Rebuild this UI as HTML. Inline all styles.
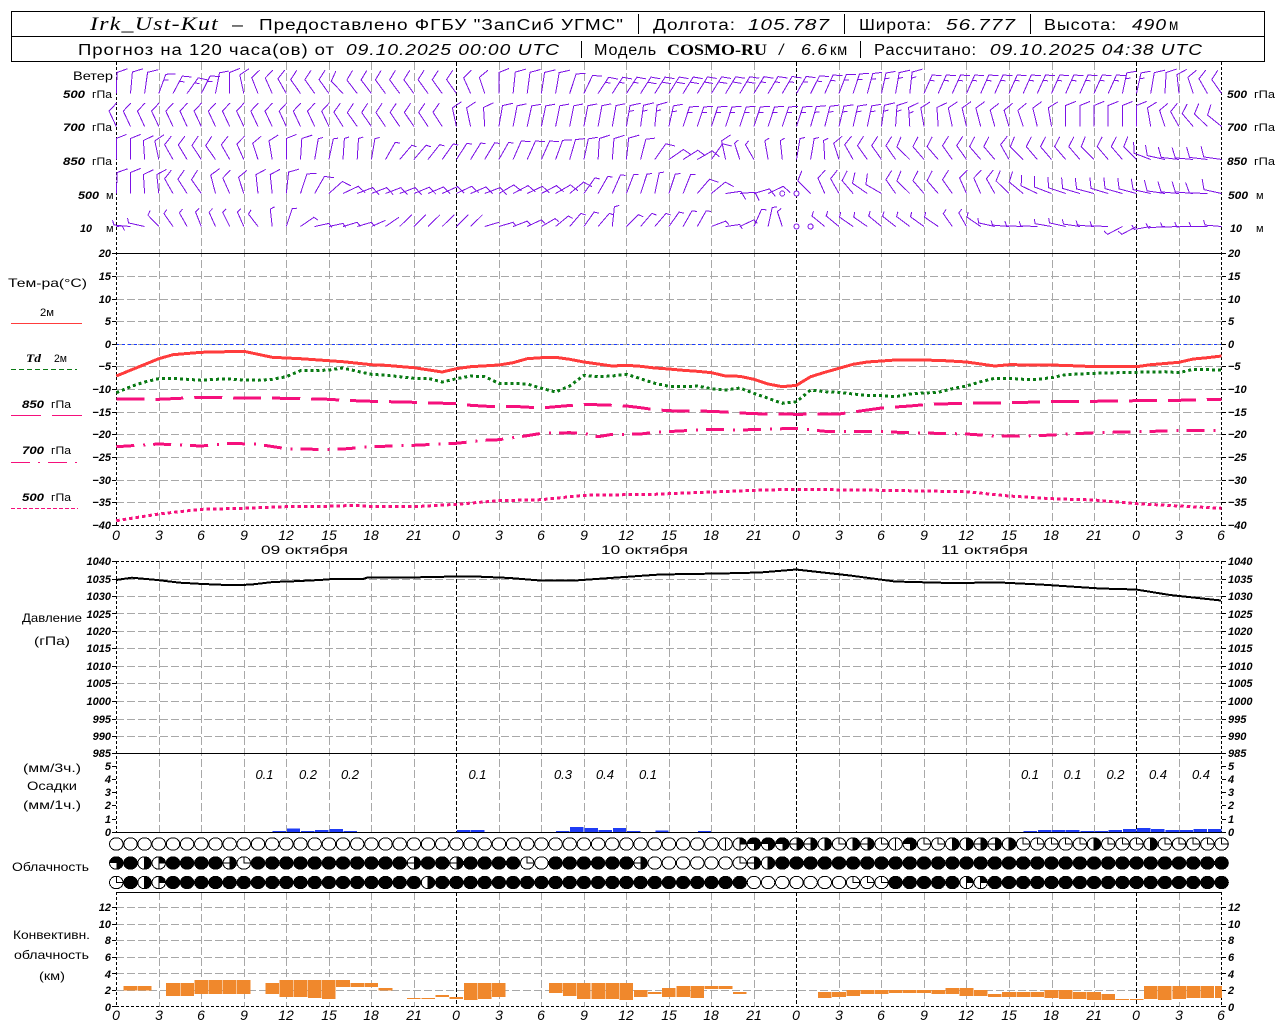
<!DOCTYPE html>
<html lang="ru"><head><meta charset="utf-8"><title>Irk_Ust-Kut</title>
<style>
html,body{margin:0;padding:0;background:#fff}
svg{display:block}
text{font-family:"Liberation Sans","DejaVu Sans",sans-serif;fill:#000}
.t{font-size:15.5px;letter-spacing:.8px}
.i{font-style:italic}
.s{font-family:"Liberation Serif","DejaVu Serif",serif;font-style:italic;font-size:19px;letter-spacing:1px}
.b{font-family:"Liberation Serif","DejaVu Serif",serif;font-weight:bold;font-size:16px}
.l{font-size:12px}
.n{font-size:11px;font-style:italic;font-weight:bold}
text[style*="normal"]{font-weight:normal}
.x{font-size:14px;font-style:italic;text-anchor:middle}
.p{font-size:13px;font-style:italic;text-anchor:middle}
.e{text-anchor:end}
.m{text-anchor:middle}
</style></head><body>
<svg id="c" xmlns="http://www.w3.org/2000/svg" width="1280" height="1024" viewBox="0 0 1280 1024">
<rect width="1280" height="1024" fill="#fff"/>
<g id="g" shape-rendering="crispEdges"></g>

<!-- header -->
<g shape-rendering="crispEdges" fill="none" stroke="#000">
<rect x="11.5" y="11.5" width="1253" height="50"/>
<path d="M11 36.5H1265M638.5 14V34M844.5 14V34M1030.5 14V34M581.5 41V58M860.5 41V58"/>
</g>
<text class="s" x="90" y="30" textLength="129">Irk_Ust-Kut</text>
<text class="t" x="232" y="30" textLength="12">–</text>
<text class="t" x="259" y="30" textLength="365">Предоставлено ФГБУ "ЗапСиб УГМС"</text>
<text class="t" x="653" y="30" textLength="83">Долгота:</text>
<text class="t i" x="748" y="30" textLength="82">105.787</text>
<text class="t" x="859" y="30" textLength="73">Широта:</text>
<text class="t i" x="946" y="30" textLength="70">56.777</text>
<text class="t" x="1044" y="30" textLength="73">Высота:</text>
<text class="t i" x="1132" y="30" textLength="35">490</text>
<text class="t" x="1169" y="30" textLength="10">м</text>

<text class="t" x="78" y="55" textLength="257">Прогноз на 120 часа(ов) от</text>
<text class="t i" x="346" y="55" textLength="214">09.10.2025 00:00 UTC</text>
<text class="t" x="594" y="55" textLength="63">Модель</text>
<text class="b" x="667" y="55" textLength="100">COSMO-RU</text>
<text class="t i" x="779" y="55">/</text>
<text class="t i" x="801" y="55" textLength="27">6.6</text>
<text class="t" x="830" y="55" textLength="18">км</text>
<text class="t" x="874" y="55" textLength="103">Рассчитано:</text>
<text class="t i" x="990" y="55" textLength="213">09.10.2025 04:38 UTC</text>

<!-- wind labels -->
<text class="l" x="73" y="80" textLength="40">Ветер</text>
<text class="n" x="63" y="98" textLength="22">500</text><text class="n" x="92" y="98" textLength="20" style="font-style:normal">гПа</text>
<text class="n" x="63" y="131" textLength="22">700</text><text class="n" x="92" y="131" textLength="20" style="font-style:normal">гПа</text>
<text class="n" x="63" y="165" textLength="22">850</text><text class="n" x="92" y="165" textLength="20" style="font-style:normal">гПа</text>
<text class="n" x="78" y="199" textLength="21">500</text><text class="n" x="106" y="199" style="font-style:normal">м</text>
<text class="n" x="80" y="232" textLength="12">10</text><text class="n" x="106" y="232" style="font-style:normal">м</text>
<text class="n" x="1227" y="98" textLength="20">500</text><text class="n" x="1254" y="98" textLength="21" style="font-style:normal">гПа</text>
<text class="n" x="1227" y="131" textLength="20">700</text><text class="n" x="1254" y="131" textLength="21" style="font-style:normal">гПа</text>
<text class="n" x="1227" y="165" textLength="20">850</text><text class="n" x="1254" y="165" textLength="21" style="font-style:normal">гПа</text>
<text class="n" x="1228" y="199" textLength="20">500</text><text class="n" x="1256" y="199" style="font-style:normal">м</text>
<text class="n" x="1230" y="232" textLength="12">10</text><text class="n" x="1256" y="232" style="font-style:normal">м</text>

<!-- temperature legend -->
<text class="l" x="8" y="287" textLength="79">Тем-ра(°C)</text>
<text class="l" x="40" y="316" textLength="14" style="font-size:11px">2м</text>
<text class="n" x="26" y="362" textLength="15" style="font-family:'Liberation Serif',serif;font-size:12px">Td</text>
<text class="n" x="54" y="362" textLength="13" style="font-style:normal">2м</text>
<text class="n" x="22" y="408" textLength="22">850</text><text class="n" x="51" y="408" textLength="20" style="font-style:normal">гПа</text>
<text class="n" x="22" y="454" textLength="22">700</text><text class="n" x="51" y="454" textLength="20" style="font-style:normal">гПа</text>
<text class="n" x="22" y="501" textLength="22">500</text><text class="n" x="51" y="501" textLength="20" style="font-style:normal">гПа</text>

<!-- temperature ticks -->
<g class="n e"><text class="n e" x="111" y="257">20</text><text class="n e" x="111" y="280">15</text><text class="n e" x="111" y="303">10</text><text class="n e" x="111" y="325">5</text><text class="n e" x="111" y="348">0</text><text class="n e" x="111" y="370">−5</text><text class="n e" x="111" y="393">−10</text><text class="n e" x="111" y="416">−15</text><text class="n e" x="111" y="438">−20</text><text class="n e" x="111" y="461">−25</text><text class="n e" x="111" y="484">−30</text><text class="n e" x="111" y="506">−35</text><text class="n e" x="111" y="529">−40</text></g>
<g class="n"><text class="n" x="1228" y="257">20</text><text class="n" x="1228" y="280">15</text><text class="n" x="1228" y="303">10</text><text class="n" x="1228" y="325">5</text><text class="n" x="1228" y="348">0</text><text class="n" x="1228" y="370">−5</text><text class="n" x="1228" y="393">−10</text><text class="n" x="1228" y="416">−15</text><text class="n" x="1228" y="438">−20</text><text class="n" x="1228" y="461">−25</text><text class="n" x="1228" y="484">−30</text><text class="n" x="1228" y="506">−35</text><text class="n" x="1228" y="529">−40</text></g>

<!-- x axis 1 -->
<g><text class="x" x="116" y="540">0</text><text class="x" x="159" y="540">3</text><text class="x" x="201" y="540">6</text><text class="x" x="244" y="540">9</text><text class="x" x="286" y="540">12</text><text class="x" x="329" y="540">15</text><text class="x" x="371" y="540">18</text><text class="x" x="414" y="540">21</text><text class="x" x="456" y="540">0</text><text class="x" x="499" y="540">3</text><text class="x" x="541" y="540">6</text><text class="x" x="584" y="540">9</text><text class="x" x="626" y="540">12</text><text class="x" x="669" y="540">15</text><text class="x" x="711" y="540">18</text><text class="x" x="754" y="540">21</text><text class="x" x="796" y="540">0</text><text class="x" x="839" y="540">3</text><text class="x" x="881" y="540">6</text><text class="x" x="924" y="540">9</text><text class="x" x="966" y="540">12</text><text class="x" x="1009" y="540">15</text><text class="x" x="1051" y="540">18</text><text class="x" x="1094" y="540">21</text><text class="x" x="1136" y="540">0</text><text class="x" x="1179" y="540">3</text><text class="x" x="1221" y="540">6</text></g>
<text class="l" x="261" y="554" textLength="87">09 октября</text>
<text class="l" x="601" y="554" textLength="87">10 октября</text>
<text class="l" x="941" y="554" textLength="87">11 октября</text>

<!-- pressure -->
<text class="l" x="22" y="622" textLength="60">Давление</text>
<text class="l" x="34" y="645" textLength="36">(гПа)</text>
<g><text class="n e" x="111" y="565">1040</text><text class="n e" x="111" y="583">1035</text><text class="n e" x="111" y="600">1030</text><text class="n e" x="111" y="618">1025</text><text class="n e" x="111" y="635">1020</text><text class="n e" x="111" y="652">1015</text><text class="n e" x="111" y="670">1010</text><text class="n e" x="111" y="687">1005</text><text class="n e" x="111" y="705">1000</text><text class="n e" x="111" y="723">995</text><text class="n e" x="111" y="740">990</text><text class="n e" x="111" y="757">985</text></g>
<g><text class="n" x="1228" y="565">1040</text><text class="n" x="1228" y="583">1035</text><text class="n" x="1228" y="600">1030</text><text class="n" x="1228" y="618">1025</text><text class="n" x="1228" y="635">1020</text><text class="n" x="1228" y="652">1015</text><text class="n" x="1228" y="670">1010</text><text class="n" x="1228" y="687">1005</text><text class="n" x="1228" y="705">1000</text><text class="n" x="1228" y="723">995</text><text class="n" x="1228" y="740">990</text><text class="n" x="1228" y="757">985</text></g>

<!-- precip -->
<text class="l" x="23" y="772" textLength="58">(мм/3ч.)</text>
<text class="l" x="27" y="790" textLength="50">Осадки</text>
<text class="l" x="23" y="809" textLength="58">(мм/1ч.)</text>
<g><text class="n e" x="111" y="770">5</text><text class="n e" x="111" y="783">4</text><text class="n e" x="111" y="796">3</text><text class="n e" x="111" y="809">2</text><text class="n e" x="111" y="823">1</text><text class="n e" x="111" y="836">0</text><text class="n" x="1228" y="770">5</text><text class="n" x="1228" y="783">4</text><text class="n" x="1228" y="796">3</text><text class="n" x="1228" y="809">2</text><text class="n" x="1228" y="823">1</text><text class="n" x="1228" y="836">0</text></g>
<g><text class="p" x="264.5" y="779">0.1</text><text class="p" x="308" y="779">0.2</text><text class="p" x="350" y="779">0.2</text><text class="p" x="477.5" y="779">0.1</text><text class="p" x="563" y="779">0.3</text><text class="p" x="605" y="779">0.4</text><text class="p" x="648" y="779">0.1</text><text class="p" x="1030" y="779">0.1</text><text class="p" x="1072.5" y="779">0.1</text><text class="p" x="1115.5" y="779">0.2</text><text class="p" x="1158" y="779">0.4</text><text class="p" x="1201" y="779">0.4</text></g>

<text class="l" x="12" y="871" textLength="77">Облачность</text>

<!-- convective -->
<text class="l" x="13" y="939" textLength="77">Конвективн.</text>
<text class="l" x="14" y="959" textLength="75">облачность</text>
<text class="l" x="39" y="980" textLength="26">(км)</text>
<g><text class="n e" x="111" y="911">12</text><text class="n e" x="111" y="928">10</text><text class="n e" x="111" y="944">8</text><text class="n e" x="111" y="961">6</text><text class="n e" x="111" y="978">4</text><text class="n e" x="111" y="994">2</text><text class="n e" x="111" y="1011">0</text><text class="n" x="1228" y="911">12</text><text class="n" x="1228" y="928">10</text><text class="n" x="1228" y="944">8</text><text class="n" x="1228" y="961">6</text><text class="n" x="1228" y="978">4</text><text class="n" x="1228" y="994">2</text><text class="n" x="1228" y="1011">0</text></g>

<!-- x axis 2 -->
<g><text class="x" x="116" y="1020">0</text><text class="x" x="159" y="1020">3</text><text class="x" x="201" y="1020">6</text><text class="x" x="244" y="1020">9</text><text class="x" x="286" y="1020">12</text><text class="x" x="329" y="1020">15</text><text class="x" x="371" y="1020">18</text><text class="x" x="414" y="1020">21</text><text class="x" x="456" y="1020">0</text><text class="x" x="499" y="1020">3</text><text class="x" x="541" y="1020">6</text><text class="x" x="584" y="1020">9</text><text class="x" x="626" y="1020">12</text><text class="x" x="669" y="1020">15</text><text class="x" x="711" y="1020">18</text><text class="x" x="754" y="1020">21</text><text class="x" x="796" y="1020">0</text><text class="x" x="839" y="1020">3</text><text class="x" x="881" y="1020">6</text><text class="x" x="924" y="1020">9</text><text class="x" x="966" y="1020">12</text><text class="x" x="1009" y="1020">15</text><text class="x" x="1051" y="1020">18</text><text class="x" x="1094" y="1020">21</text><text class="x" x="1136" y="1020">0</text><text class="x" x="1179" y="1020">3</text><text class="x" x="1221" y="1020">6</text></g>
</svg>
<script>
(function(){
document.querySelectorAll('text[textLength]').forEach(function(t){t.setAttribute('lengthAdjust','spacingAndGlyphs')});
var X=function(h){return 116.3+14.17*h};
var o=[];
function line(x1,y1,x2,y2,c,w,d){o.push('<path fill="none" stroke="'+c+'" stroke-width="'+(w||1)+'"'+(d?' stroke-dasharray="'+d+'"':'')+' d="M'+x1+' '+y1+'L'+x2+' '+y2+'"/>')}
var GR='#a8a8a8',GD='8 3';
[276.5,299.5,321.5,366.5,389.5,412.5,434.5,457.5,480.5,502.5,
 579.5,596.5,613.5,631.5,648.5,666.5,683.5,701.5,719.5,736.5,
 907.5,924.5,940.5,957.5,973.5,990.5].forEach(function(y){line(116,y,1222,y,GR,1,GD)});
line(116,344.5,1222,344.5,GR,1,GD);
line(116,344.5,1222,344.5,'#1a3cff',1,'3 3');
var P=[[62,525],[561,832],[892,1007]];
for(var k=1;k<26;k++){if(k%8==0)continue;var x=Math.round(116.3+42.51*k)+.5;P.forEach(function(p){line(x,p[0],x,p[1],GR,1,GD)})}
[456.5,796.5,1136.5].forEach(function(x){P.forEach(function(p){line(x,p[0],x,p[1],'#000',1,'4 2')})});
P.forEach(function(p){line(116.5,p[0],116.5,p[1],'#000',1,'3 2');line(1221.5,p[0],1221.5,p[1],'#000',1,'3 2')});
line(116,253.5,1222,253.5,'#000');line(116,525.5,1222,525.5,'#000',1,'3 2');
line(116,561.5,1222,561.5,'#000',1,'3 2');line(116,753.5,1222,753.5,'#000');
line(116,832.5,1222,832.5,'#000');line(116,892.5,1222,892.5,'#000');line(116,1006.5,1222,1006.5,'#000',1,'3 2');
[253,276,299,321,344,366,389,412,434,457,480,502,525,561,579,596,613,631,648,666,683,701,719,736,753,766,779,792,805,819,832,907,924,940,957,973,990,1006].forEach(function(y){
 line(112,y+.5,116,y+.5,'#000');line(1222,y+.5,1226,y+.5,'#000')});
line(11,323.5,82,323.5,'#ff3c3c');line(11,369.5,77,369.5,'#0a7a14',1,'5 3');
line(11,415.5,41,415.5,'#f5107c');line(52,415.5,82,415.5,'#f5107c');
line(11,462.5,30,462.5,'#f5107c');line(38,462.5,40,462.5,'#f5107c');line(48,462.5,67,462.5,'#f5107c');line(75,462.5,77,462.5,'#f5107c');
line(11,508.5,78,508.5,'#f5107c',1,'4 2');
[[11,1],[12,3.3],[13,1],[14,2],[15,3],[16,1],[24,2],[25,2],[31,1],[32,5],[33,4],[34,2],[35,4],[36,1],[38,1.3],[41,1],[64,1],[65,2],[66,2],[67,2],[68,1],[69,1],[70,2],[71,3],[72,4],[73,3],[74,2],[75,2],[76,3],[77,3]].forEach(function(b){
 o.push('<rect fill="#1f3cf5" x="'+(X(b[0])+.5)+'" y="'+(832-b[1])+'" width="13.4" height="'+b[1]+'"/>')});
[[1,708,722],[2,708,722],[4,699,738],[5,699,738],[6,690,732],[7,690,732],[8,690,732],[9,690,732],[11,699,732],[12,690,741],[13,690,741],[14,690,744],[15,690,747],[16,690,711],[17,699,711],[18,699,711],[19,714,722],[21,744,747],[22,744,747],[23,735,741],[24,741,747],[25,699,750],[26,699,747],[27,699,741],[31,699,729],[32,699,738],[33,699,747],[34,699,747],[35,699,747],[36,699,750],[37,720,741],[38,726,732],[39,714,741],[40,708,741],[41,708,744],[42,708,717],[43,708,717],[44,726,732],
[50,726,744],[51,726,741],[52,720,738],[53,720,732],[54,720,732],[55,720,729],[56,720,729],[57,720,729],[58,720,732],[59,714,732],[60,714,738],[61,720,738],[62,732,741],[63,726,741],[64,726,741],[65,726,741],[66,720,744],[67,720,747],[68,726,747],[69,726,750],[70,732,750],[71,747,750],[72,747,750],[73,708,747],[74,708,750],[75,708,747],[76,708,744],[77,708,744],[78,708,744]].forEach(function(b){
 var x=X(b[0]-.5)+.3,w=13.6;if(b[0]==78)w=7;
 o.push('<rect fill="#f0882c" x="'+x+'" y="'+(750+b[1]/3)+'" width="'+w+'" height="'+((b[2]-b[1])/3)+'"/>')});
function poly(pts,c,w,d){var s=pts.map(function(p){return X(p[0]).toFixed(1)+','+p[1]}).join(' ');
 o.push('<polyline fill="none" stroke="'+c+'" stroke-width="'+w+'" stroke-linejoin="round"'+(d?' stroke-dasharray="'+d+'"':'')+' points="'+s+'"/>')}
poly([[0,376],[3,358.7],[4,354.7],[6,352.3],[9,351.3],[11,357.3],[13,358.7],[15,360.7],[16,361.7],[18,364.7],[19,365.3],[21,367.7],[23,372],[24,368.7],[25,366.7],[27,365],[28,362.7],[29,358.7],[30,357.7],[31,357.3],[32,359.3],[33,362],[34,364],[35,366],[36,365.3],[37,366.3],[38,368],[39,369],[40,370.3],[41,371.3],[42,372.7],[43,376],[44,376.3],[45,379.3],[46,384],[47,386.7],[48,385.3],[49,376.7],[50,372.3],[51,368.3],[52,364.3],[53,362],[54,361],[55,360],[58,360.3],[60,362],[61,364],[62,366],[63,364.7],[66,365],[68,366],[69,366.7],[72,366.7],[73,364.7],[75,362.3],[76,359],[77,357.7],[78,356]],'#ff3c3c',3);
poly([[0,392.7],[1,386.7],[2,382],[3,378.7],[4,378.3],[5,379.3],[6,380.3],[7,379.3],[8,379],[9,380],[10,380.3],[11,379.3],[12,376.7],[13,370.7],[14,370.7],[15,370],[16,368],[17,371.3],[18,374.3],[19,375.3],[20,376.7],[21,378.3],[22,378.3],[23,382],[24,378.7],[25,376],[26,376.7],[27,383.3],[28,383.3],[29,384],[30,388.3],[31,392],[32,386],[33,375.3],[34,376.7],[35,376],[36,374.3],[37,378.7],[38,383.3],[39,386.3],[40,386.7],[41,386],[42,388.7],[43,390],[44,388],[45,393.3],[46,398.3],[47,403.3],[48,401.7],[49,390],[50,391.7],[51,392.3],[52,394],[53,395.3],[54,395.7],[55,396.7],[56,394],[57,393],[58,392.3],[59,388.7],[60,386],[61,381.7],[62,378.3],[63,378.3],[64,379.3],[65,379.3],[66,377.7],[67,374.7],[68,374],[69,373.3],[72,372.3],[74,371.7],[75,372.7],[76,369.3],[78,370]],'#0a7a14',3,'3 3');
poly([[0,399],[3,399.3],[6,397.3],[9,398],[12,398.3],[15,399.3],[16,400.3],[18,401.3],[21,402.3],[24,403.7],[25,405.3],[27,407],[28,406.3],[30,408],[31,406.7],[33,404.3],[35,405.3],[36,406],[37,407.7],[38,409.7],[39,410.7],[40,411],[42,411.3],[45,413.7],[48,414.3],[51,414],[52,412],[54,408],[56,406],[57,404.7],[58,404],[60,403.3],[63,402.7],[66,401.7],[69,401.3],[72,400.7],[75,400.3],[78,399.3]],'#f5107c',3,'28 11');
poly([[0,446.7],[3,444],[6,446],[8,443.3],[10,444.3],[12,448.7],[14,449.3],[15,449.3],[16,449],[18,446.7],[21,445.3],[24,443.3],[26,440.3],[27,439.7],[29,435.7],[30,433.3],[32,432.7],[33,433.3],[34,436.7],[35,434.3],[36,434.3],[37,434],[38,432.3],[42,429.3],[44,430],[48,428.3],[50,431.3],[52,431.3],[54,431.7],[56,432.7],[60,434],[62,436],[65,435.7],[66,435],[69,432.7],[72,431.7],[75,430.7],[78,430.3]],'#f5107c',3,'18 9 2 8');
poly([[0,520.7],[3,514],[6,509.3],[9,508.3],[12,506.7],[15,506.3],[17,505.3],[18,506.7],[21,506.7],[24,504.3],[27,500.7],[30,499.7],[33,495.3],[36,494.7],[38,494.3],[42,492],[45,490.3],[48,489.3],[54,490.3],[60,491.7],[63,496],[66,498.7],[69,500],[72,503.7],[75,506],[78,508.3]],'#f5107c',3,'3.5 3');
o.push('<polyline fill="none" stroke="#000" stroke-width="2" points="116,580 132,577.7 157,580 180,582.7 203,584 227,585 250,584.7 273,582 293,581.3 320,580 333,579 363,579 367,577.7 400,577.7 456,576.5 480,576.7 510,578 540,580.5 575,580.5 610,578 660,574.5 720,573.5 760,572.5 796,569.5 850,575.5 895,581.5 950,583 1000,582.5 1040,584.5 1100,588.5 1136,589.5 1170,595 1221,600.5"/>');
var C='#7c12e6',RY=[93.5,126.5,159.5,193.5,226.5];
var K=[
[[0,2],[2,8],[3,20],[4,28],[5,35],[6,27],[7,11],[8,0],[9,-10],[10,-18],[11,-20],[12,-25],[13,-30],[15,-30],[16,-38],[17,-32],[24,-30],[25,-20],[26,-15],[27,0],[28,5],[31,8],[32,15],[34,28],[45,26],[48,25],[52,15],[55,8],[56,5],[57,20],[70,20],[71,10],[72,10],[73,8],[74,3],[75,-5],[76,-15],[77,-25],[78,-30]],
[[0,-25],[15,-25],[17,-30],[23,-28],[24,-10],[25,-10],[26,-3],[27,8],[29,10],[36,8],[38,5],[40,15],[48,15],[50,12],[53,10],[55,3],[56,-3],[57,-8],[58,-3],[59,-10],[64,-15],[66,-8],[67,0],[72,0],[73,-8],[74,-15],[75,-25],[76,-35],[77,-40],[78,-45]],
[[0,0],[1,0],[2,-3],[3,-10],[4,-25],[7,-30],[8,-25],[10,-15],[11,-8],[12,0],[13,3],[14,8],[15,10],[16,3],[17,3],[18,8],[19,25],[20,35],[21,35],[24,28],[27,25],[28,20],[30,20],[33,10],[34,3],[36,5],[37,12],[38,30],[39,50],[41,55],[42,30],[43,-10],[44,-15],[45,-25],[46,-8],[47,-5],[48,8],[49,8],[50,-3],[51,-15],[52,-25],[53,-30],[55,-30],[56,-40],[57,-35],[58,-35],[59,-30],[60,-30],[61,-35],[62,-35],[63,-25],[64,-40],[65,-35],[68,-35],[69,-40],[70,-35],[71,-35],[72,-40],[73,-65],[74,-75],[75,-82],[76,-85],[77,-82],[78,-80]],
[[0,2],[1,0],[2,-3],[3,-5],[4,-25],[5,-28],[6,-30],[7,-12],[8,-20],[9,-15],[10,-5],[11,-5],[12,5],[13,15],[14,25],[15,43],[16,60],[17,65],[20,65],[24,60],[26,65],[27,55],[29,60],[31,55],[32,45],[33,30],[35,20],[37,15],[38,10],[39,15],[40,18],[41,35],[42,45],[43,80],[44,85],[45,70],[46,60],[47,null],[48,null],[49,-40],[50,-20],[51,-25],[52,-35],[53,-50],[54,-55],[55,-30],[56,-40],[57,-35],[58,-35],[59,-30],[60,-20],[61,-20],[62,-25],[63,-40],[64,-45],[65,-60],[66,-65],[67,-68],[68,-70],[69,-72],[70,-70],[72,-72],[73,-75],[74,-80],[75,-85],[76,-85],[77,-88],[78,-75]],
[[0,85],[1,-85],[2,-75],[3,-38],[4,-30],[5,-25],[6,-18],[7,-20],[8,-22],[9,-20],[10,-32],[11,-5],[12,15],[13,50],[14,75],[15,75],[16,70],[17,70],[18,62],[19,50],[20,40],[25,40],[26,70],[27,70],[28,65],[29,60],[30,55],[31,45],[32,35],[33,30],[34,35],[35,5],[36,40],[37,35],[38,35],[39,30],[40,25],[41,25],[42,65],[43,80],[44,60],[45,20],[46,10],[47,-15],[48,null],[49,null],[50,-45],[51,-45],[52,-50],[53,-50],[54,-45],[58,-50],[59,-30],[60,-25],[61,-50],[62,-75],[63,-85],[64,-88],[65,-88],[66,-78],[67,-75],[68,-80],[69,-85],[70,-88],[71,-118],[72,-118],[73,-100],[74,-95],[75,-92],[77,-90],[78,-85]]
];
function val(key,i){for(var j=0;j<key.length-1;j++){var a=key[j],b=key[j+1];if(i==a[0])return a[1];if(i==b[0])return b[1];
 if(i>a[0]&&i<b[0]){if(a[1]===null||b[1]===null)return a[1];return a[1]+(b[1]-a[1])*(i-a[0])/(b[0]-a[0])}}return key[key.length-1][1]}
var d='';var R=Math.PI/180;
function f(n){return n.toFixed(1)}
K.forEach(function(key,r){
 for(var i=0;i<=78;i++){
  var a=val(key,i),bx=X(i),by=RY[r];
  if(a===null){o.push('<circle fill="#fff" stroke="'+C+'" cx="'+f(bx)+'" cy="'+by+'" r="2.5"/>');continue}
  /* angles read from the anisotropic crops: correct horizontal foreshortening */
  var fixed=(r==0&&i<=8)||(r==1&&i<=15);
  if(!fixed&&Math.abs(a)<85){a=Math.atan(1.22*Math.tan(a*R))/R}
  var abs=Math.abs(a);
  var L=a>=0?(a<5?21:22-0.08*a):(abs<15?19:abs<45?17:18);
  if(r==4){L*=.92;if(i==0)L=6}
  var tx=bx+L*Math.sin(a*R),ty=by-L*Math.cos(a*R);
  d+='M'+f(bx)+' '+f(by)+'L'+f(tx)+' '+f(ty);
  var fl=a>=10?9.5:11;
  if(r==4){fl=5;if((i>=18&&i<=26))fl=0}
  if(r==2&&((i>=14&&i<=27)||(i>=44&&i<=50)))fl=5;
  if(r==3&&i>=33&&i<=40)fl=5;
  var fa=(a+68)*R;
  if(fl>0)d+='L'+f(tx+fl*Math.sin(fa))+' '+f(ty-fl*Math.cos(fa));
  var dbl=(r==0&&((i>=3&&i<=6)||(i>=34&&i<=72)))||(r==1&&i>=36&&i<=56);
  if(dbl){var sx=tx-6*Math.sin(a*R),sy=ty+6*Math.cos(a*R),l2=(r==0&&i>=37&&i<=44)?9:5;
   d+='M'+f(sx)+' '+f(sy)+'L'+f(sx+l2*Math.sin(fa))+' '+f(sy-l2*Math.cos(fa))}
 }
});
o.push('<path fill="none" stroke="'+C+'" d="'+d+'"/>');
var rows=[
 function(i){var m={43:'V',44:'R',45:'T',46:'T',47:'T',48:'X',49:'X',50:'H',51:'Q',52:'H',53:'X',54:'Q',55:'V',56:'T',57:'Q',58:'Q',59:'H',60:'H',61:'X',62:'X',63:'H',69:'H',73:'H'};if(i<43)return 'E';return m[i]||'Q'},
 function(i){var m={0:'T',2:'H',3:'R',8:'X',9:'Q',21:'X',24:'X',29:'Q',30:'E',37:'X',38:'E',39:'E',40:'E',41:'E',42:'E',43:'E',44:'Q',45:'X',46:'H'};return m[i]||'F'},
 function(i){var m={0:'Q',2:'H',3:'R',22:'H',52:'Q',53:'Q',54:'Q',60:'R',61:'R'};if(i>=45&&i<=51)return 'E';return m[i]||'F'}
];
var CY=[844,863,882.5],rx=6.7,ry=6.2;
function wedge(cx,cy,a0,a1){
 var s='M'+f(cx)+' '+f(cy);
 for(var t=a0;t<=a1;t+=15){s+='L'+f(cx+rx*Math.sin(t*R))+' '+f(cy-ry*Math.cos(t*R))}
 return s+'Z'}
rows.forEach(function(fn,r){for(var i=0;i<=78;i++){
 var t=fn(i),cx=X(i),cy=CY[r];
 o.push('<ellipse cx="'+f(cx)+'" cy="'+cy+'" rx="'+rx+'" ry="'+ry+'" fill="'+(t=='F'?'#000':'#fff')+'" stroke="#000"/>');
 var w='',l='';
 if(t=='T'){w=wedge(cx,cy,0,90)+wedge(cx,cy,90,180)+wedge(cx,cy,270,360)}
 if(t=='H'){w=wedge(cx,cy,0,180);l='M'+f(cx)+' '+(cy-ry)+'V'+(cy+ry)}
 if(t=='X'){w=wedge(cx,cy,0,180);l='M'+f(cx-rx)+' '+cy+'H'+f(cx+rx)}
 if(t=='Q'){l='M'+f(cx)+' '+(cy-ry)+'V'+cy+'H'+f(cx+rx)}
 if(t=='R'){w=wedge(cx,cy,0,90);l='M'+f(cx)+' '+(cy-ry)+'V'+(cy+ry)+'M'+f(cx)+' '+cy+'H'+f(cx+rx)}
 if(t=='V'){l='M'+f(cx)+' '+(cy-ry)+'V'+(cy+ry)}
 if(w)o.push('<path fill="#000" d="'+w+'"/>');
 if(l)o.push('<path fill="none" stroke="#000" d="'+l+'"/>');
}});
document.getElementById('g').innerHTML=o.join('');
})();
</script>
</body></html>
